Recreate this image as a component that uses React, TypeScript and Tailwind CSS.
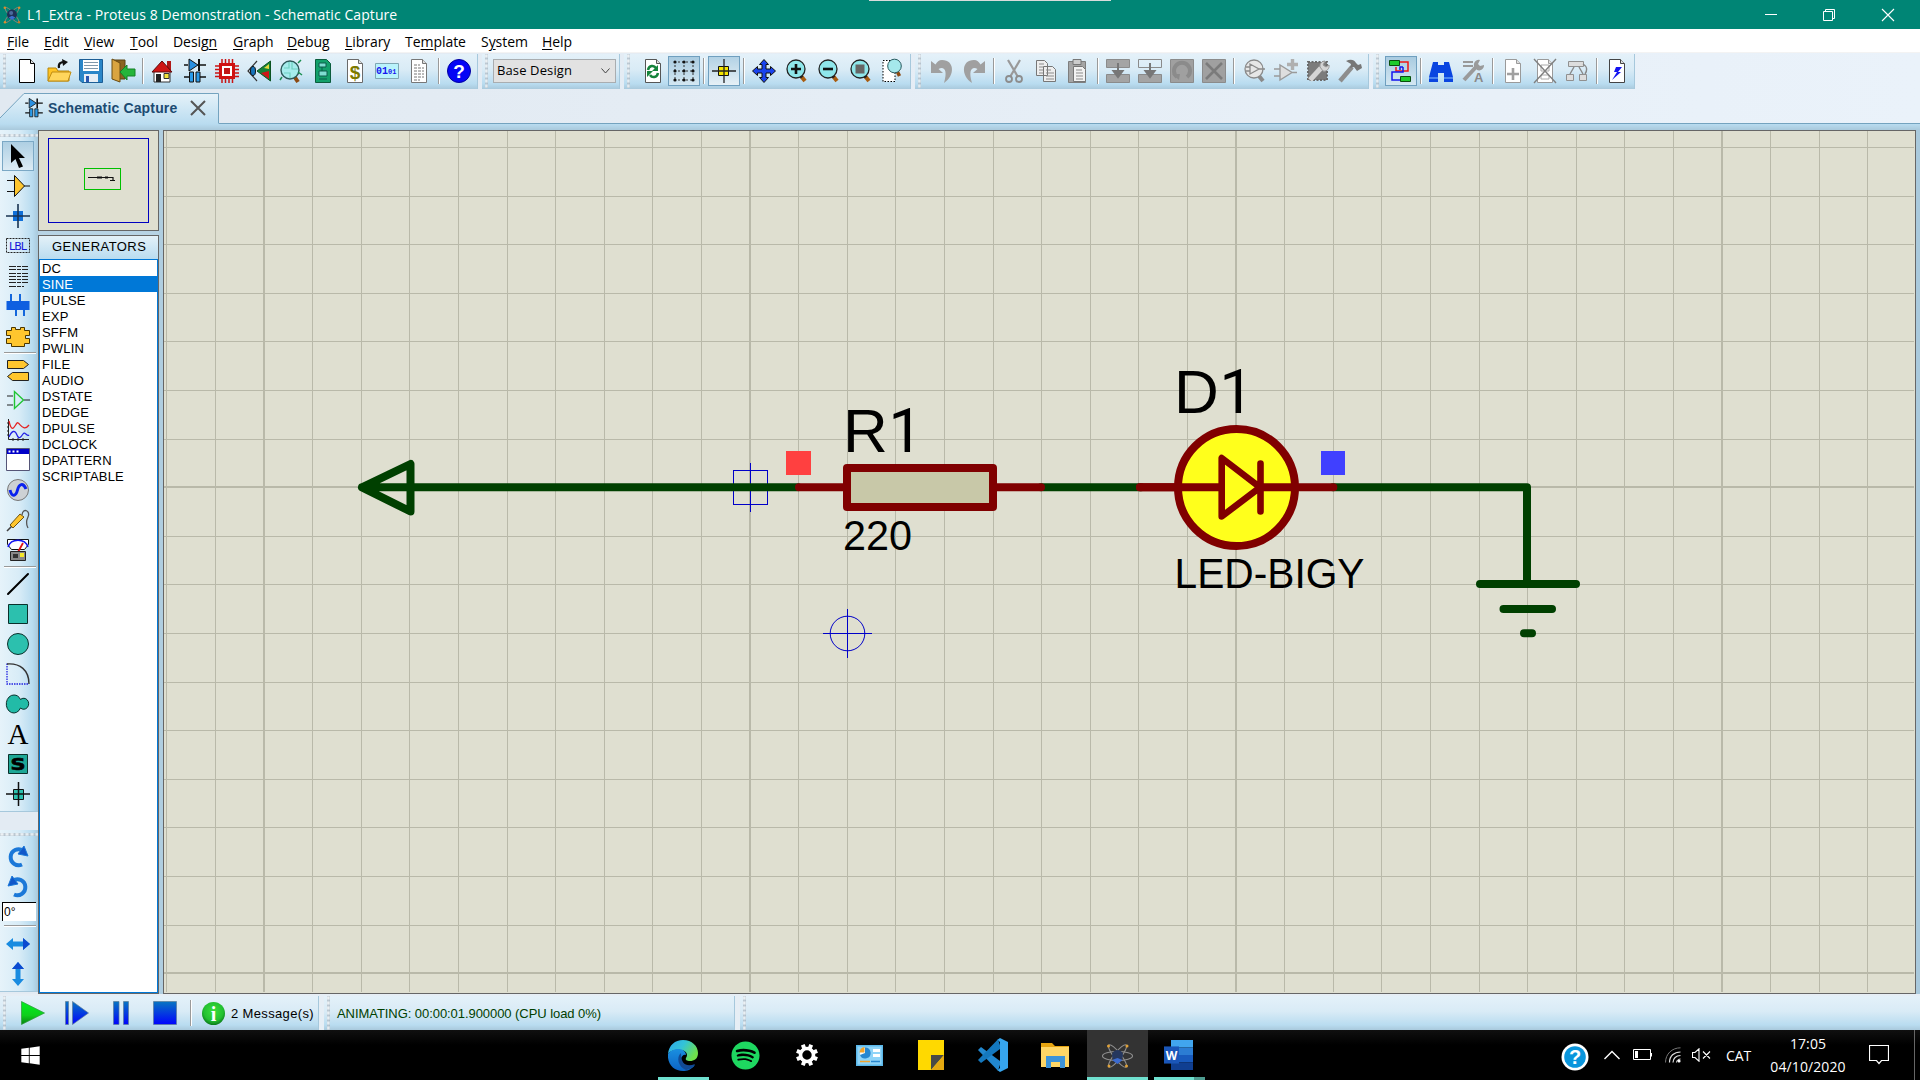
import React from "react";
import { FaSpotify, FaWindows } from "react-icons/fa";

type Kids = { children?: React.ReactNode };

const BAND =
  "bg-[linear-gradient(to_bottom,#e4f1f9_0%,#d9ebf6_45%,#b9dcf0_85%,#a9c9dc_100%)]";
const SIDE_BAND =
  "bg-[linear-gradient(to_right,#e6f3fa_0%,#d8ecf7_50%,#b9dcf0_85%,#a9c9dc_100%)]";

function Svg({ children, w = 24, h = 24 }: Kids & { w?: number; h?: number }) {
  return (
    <svg width={w} height={h} viewBox={`0 0 ${w} ${h}`} fill="none" className="block shrink-0 overflow-visible">
      {children}
    </svg>
  );
}

function Handle() {
  return (
    <div className="h-full w-[3px] shrink-0 bg-[radial-gradient(circle_at_40%_40%,#ffffff_0%,#a3b1bd_90%)] bg-[length:3px_5px] opacity-80" />
  );
}

function HandleH() {
  return (
    <div className="h-[3px] w-full shrink-0 bg-[radial-gradient(circle_at_40%_40%,#ffffff_0%,#a3b1bd_90%)] bg-[length:5px_3px] opacity-80" />
  );
}

function Sep() {
  return (
    <div className="flex h-full w-2 shrink-0 items-center justify-center">
      <div className="h-[26px] w-[2px] border-r border-white bg-[#9a9a9a]" />
    </div>
  );
}

function Tool({ children, active }: Kids & { active?: "dark" | "light" }) {
  const on =
    active === "dark"
      ? "border border-[#6f9fbf] bg-[linear-gradient(to_bottom,#a9cbe0,#d3e7f2)]"
      : active === "light"
      ? "border border-[#6f9fbf] bg-[linear-gradient(to_bottom,#b3d2e5,#e6f0f6)]"
      : "";
  return <div className={`flex h-[30px] w-8 shrink-0 items-center justify-center ${on}`}>{children}</div>;
}

function Band({ children, cls }: Kids & { cls: string }) {
  return (
    <div className={`flex h-[35px] shrink-0 items-center border-r border-[#a6c8dc] pb-px ${BAND} ${cls}`}>{children}</div>
  );
}

function Page({ children, c = "#000", x = 4 }: Kids & { c?: string; x?: number }) {
  return (
    <g>
      <path d={`M${x + 0.5} .5h11l4 4v19h-15z`} fill="#fff" stroke={c} />
      <path d={`M${x + 11.5} .5v4h4`} fill="#ddd" stroke={c} />
      {children}
    </g>
  );
}

function Lens({ fill = "#8fe6ea", c = "#222", handle = "#a85c10", children }: Kids & { fill?: string; c?: string; handle?: string }) {
  return (
    <g transform="translate(2 0)">
      <path d="M15 17l4 5" stroke={handle} strokeWidth="4" />
      <path d="M14 16l2 2.5" stroke={c} strokeWidth="3" />
      <circle cx="10" cy="10" r="9" fill={fill} stroke={c} strokeWidth="1.3" />
      {children}
    </g>
  );
}

function SchematicGlyph() {
  return (
    <Svg>
      <path d="M1 6h4M16 6h7M1 18h6M16 18h7" stroke="#111" strokeWidth="1.6" />
      <path d="M6 0v12l9-6z" fill="#2a8fe0" stroke="#111" />
      <path d="M16 0v12" stroke="#111" strokeWidth="2" />
      <path d="M6.5 13h4v10h-4zM13 13h4v10h-4z" fill="#2a9bea" stroke="#111" />
    </Svg>
  );
}

function ProteusLogo({ s = 22 }: { s?: number }) {
  return (
    <svg width={s} height={s} viewBox="0 0 24 24" fill="none" className="block shrink-0">
      <ellipse cx="12" cy="12" rx="12" ry="3" transform="rotate(48 12 12)" stroke="#8f857b" strokeWidth="1.1" />
      <ellipse cx="12" cy="12" rx="12" ry="3" transform="rotate(-48 12 12)" stroke="#8a8178" strokeWidth="1.1" />
      <circle cx="12" cy="11.500" r="6" fill="#1e3056" />
      <circle cx="11" cy="9.5" r="2.400" fill="#4b6a9e" />
      <path d="M8 15l4 3 4-3-4-2z" fill="#3b6fd0" />
      <circle cx="3.4" cy="3.2" r="1.5" fill="#d98e2b" />
      <circle cx="20.6" cy="3.2" r="1.5" fill="#d98e2b" />
      <circle cx="3.6" cy="20.6" r="1.5" fill="#d98e2b" />
      <circle cx="20.4" cy="20.6" r="1.5" fill="#c07c2b" />
    </svg>
  );
}

function TitleBar() {
  return (
    <div className="flex h-[29px] items-start bg-[#008575] text-white">
      <div className="flex h-full w-[869px] items-center pl-[2px]">
        <ProteusLogo s={20} />
        <span className="ml-[5px] font-['Open_Sans'] text-[14px] tracking-[0.08px] whitespace-nowrap">
          L1_Extra - Proteus 8 Demonstration - Schematic Capture
        </span>
      </div>
      <div className="h-px w-[242px] bg-[#d8dcdc]" />
      <div className="ml-auto flex h-full items-center pr-[2px]">
        <div className="flex w-[59px] justify-center"><Svg w={12} h={12}><path d="M0 5.5h12" stroke="#fff" /></Svg></div>
        <div className="flex w-[58px] justify-center">
          <Svg w={12} h={12}><path d="M.5 2.5h9v9h-9zM2.5 2V.5h9v9H10" stroke="#fff" /></Svg>
        </div>
        <div className="flex w-[60px] justify-center"><Svg w={12} h={12}><path d="M0 0l12 12M12 0L0 12" stroke="#fff" strokeWidth="1.1" /></Svg></div>
      </div>
    </div>
  );
}

const MENU: [string, string, string, string][] = [
  ["", "F", "ile", "w-[37px]"],
  ["", "E", "dit", "w-[40px]"],
  ["", "V", "iew", "w-[46px]"],
  ["", "T", "ool", "w-[43px]"],
  ["Desig", "n", "", "w-[60px]"],
  ["", "G", "raph", "w-[54px]"],
  ["", "D", "ebug", "w-[58px]"],
  ["", "L", "ibrary", "w-[60px]"],
  ["Te", "m", "plate", "w-[76px]"],
  ["S", "y", "stem", "w-[61px]"],
  ["", "H", "elp", "w-[40px]"],
];

function MenuBar() {
  return (
    <div className="flex h-[23px] items-center bg-white pt-px pl-[7px] font-['Open_Sans'] text-[14px] tracking-[-0.05px] text-black">
      {MENU.map(([a, u, b, w]) => (
        <div key={a + u + b} className={`shrink-0 whitespace-nowrap ${w}`}>
          {a}
          <span className="underline underline-offset-2">{u}</span>
          {b}
        </div>
      ))}
    </div>
  );
}

function Toolbars() {
  const G = "#8b8b8b";
  return (
    <div className="flex h-[37px] items-start gap-1 border-t border-[#f3f3f3] bg-[linear-gradient(to_right,#e1e9f1,#eaf2fa)] pt-px">
      <Band cls="w-[478px]">
        <div className="ml-[3px] h-full w-2"><Handle /></div>
        <Tool><Svg><Page /></Svg></Tool>
        <Tool>
          <Svg>
            <path d="M1 22V9h8l2 3h11v10z" fill="#ffc425" stroke="#b7860b" />
            <path d="M1 22l4-9h19l-3 9z" fill="#ffd65c" stroke="#c08c12" />
            <path d="M12 9c-1-5 2-6 6-6" stroke="#111" strokeWidth="2.2" />
            <path d="M15 0l6 3-5 4z" fill="#111" />
          </Svg>
        </Tool>
        <Tool>
          <Svg>
            <path d="M.5 .5h23v23H3l-2.500-2.500z" fill="#2a86c8" stroke="#1c5d95" />
            <path d="M4 1h16v11H4z" fill="#fff" />
            <path d="M5 3.500h14M5 6.500h14M5 9.500h14" stroke="#7f98ab" />
            <path d="M5 15h14v8H5z" fill="#e7eef5" />
            <path d="M7 17h3v6H7z" fill="#2a57b0" />
          </Svg>
        </Tool>
        <Tool>
          <Svg>
            <path d="M2 1h12v19H2z" fill="#8a6320" stroke="#5d4312" />
            <path d="M1 0l8 4v19l-8-3z" fill="#d9a440" stroke="#6b4c12" />
            <path d="M9 13l7-7v4h8v7h-8v4z" fill="#25b53a" stroke="#168026" />
          </Svg>
        </Tool>
        <Sep />
        <Tool>
          <Svg>
            <path d="M3 12h16v11H3z" fill="#fff" stroke="#333" />
            <path d="M16 2h4v10h-4z" fill="#b01818" />
            <path d="M1 13L11 2l10 11z" fill="#cf1515" stroke="#5d0a0a" />
            <path d="M5 15h5v8H5z" fill="#222" />
            <path d="M13 14.500h5v5h-5z" fill="#f2e33b" stroke="#333" />
          </Svg>
        </Tool>
        <Tool><SchematicGlyph /></Tool>
        <Tool>
          <Svg>
            <path d="M7 0v24M10.500 0v24M14 0v24M17.500 0v24M0 7h24M0 10.500h24M0 14h24M0 17.500h24" stroke="#c81414" strokeWidth="1.5" />
            <path d="M4 4h16v16H4z" fill="#cf1212" />
            <path d="M7 7h10v10H7z" fill="#fff" />
            <path d="M9 9h6v6H9z" fill="#c21616" />
          </Svg>
        </Tool>
        <Tool>
          <Svg>
            <path d="M10 2L1 12l9 10" stroke="#333" strokeWidth="1.2" />
            <ellipse cx="6" cy="12" rx="2.500" ry="4.500" fill="#1672b8" stroke="#111" />
            <path d="M23.500 2v20L10 12z" fill="#138236" stroke="#0c5321" />
            <path d="M22 12v8l-8-6z" fill="#cf1515" />
            <path d="M17 9l5-4v5z" fill="#e4d83c" />
          </Svg>
        </Tool>
        <Tool>
          <Svg>
            <path d="M15 17l4 6" stroke="#8c4a12" strokeWidth="4" />
            <circle cx="11" cy="11" r="9" fill="#a6ecec" stroke="#2d5959" strokeWidth="1.400" />
            <path d="M5 9h5V3M13 3v7h6M5 14h6v5" stroke="#6fd0c0" strokeWidth="1.200" />
            <path d="M19 4l3-3M3 18l-2 3M19 13l4 3" stroke="#1a8f50" strokeWidth="1.500" />
          </Svg>
        </Tool>
        <Tool>
          <Svg>
            <path d="M4.500 .5h11l4 4v19h-15z" fill="#12a06a" stroke="#0b5d3d" />
            <path d="M8 4h7v4H8zM8 12h8v5H8zM11 8v4M8 20h8" fill="#7eddd0" stroke="#0a5c4a" />
          </Svg>
        </Tool>
        <Tool>
          <Svg><Page c="#6a6a6a" /><text x="12" y="20" textAnchor="middle" fontFamily="Liberation Sans" fontWeight="700" fontSize="19" fill="#7d7a00">$</text></Svg>
        </Tool>
        <Tool>
          <Svg>
            <path d="M.5 4.500h23v15H.5z" fill="#b9f3fb" stroke="#7fa6b3" />
            <text x="1" y="15" fontFamily="Liberation Mono" fontWeight="700" fontSize="10" fill="#1717f0">01<tspan fontSize="7">01</tspan></text>
          </Svg>
        </Tool>
        <Tool>
          <Svg><Page c="#777"><path d="M7 6h6M7 9h10M7 12h10M7 15h10M7 18h10M7 21h6" stroke="#777" strokeDasharray="3 1" /></Page></Svg>
        </Tool>
        <Sep />
        <Tool>
          <Svg>
            <circle cx="12" cy="12" r="11.500" fill="#0505f5" stroke="#0000a0" />
            <text x="12" y="19" textAnchor="middle" fontFamily="Liberation Sans" fontWeight="700" fontSize="19" fill="#fff">?</text>
          </Svg>
        </Tool>
      </Band>

      <Band cls="w-[138px]">
        <div className="ml-[3px] h-full w-2"><Handle /></div>
        <div className="flex h-6 w-[123px] items-center justify-between border border-[#a9adb0] bg-[#e2e2e2] pr-[5px] pl-[3px] font-['Open_Sans'] text-[13px] tracking-[0.12px] text-black">
          Base Design
          <Svg w={9} h={6}><path d="M.5 .5l4 4.500 4-4.500" stroke="#444" /></Svg>
        </div>
      </Band>

      <Band cls="w-[287px]">
        <div className="ml-[3px] h-full w-[9px]"><Handle /></div>
        <Tool>
          <Svg><g transform="translate(1 0)"><Page c="#555"><path d="M7 11c1-5 6-5 8-2" stroke="#16843c" strokeWidth="2.500" /><path d="M17 6v6h-6zM6 12h6l-6 6z" fill="#16843c" /><path d="M17 14c-1 5-6 5-8 2" stroke="#16843c" strokeWidth="2.500" /></Page></g></Svg>
        </Tool>
        <Tool active="dark">
          <Svg>
            <path d="M2 3h20M2 12h20M2 21h20M3 2v20M12 2v20M21 2v20" stroke="#333" strokeDasharray="2 2" />
            {[3, 12, 21].map((y) => [3, 12, 21].map((x) => <circle key={`${x}-${y}`} cx={x} cy={y} r="1.600" fill="#111" />))}
          </Svg>
        </Tool>
        <Sep />
        <Tool active="light">
          <Svg>
            <path d="M6.500 7.500h10v9h-10z" fill="#f5e400" stroke="#111" />
            <path d="M0 12h24M12 0v24" stroke="#222" strokeWidth="1.300" />
          </Svg>
        </Tool>
        <Sep />
        <Tool>
          <Svg>
            <path d="M12 .5l4.500 5H14v4.500h4.500V7.500L23.500 12l-5 4.500V14H14v4.500h2.500l-4.500 5-4.500-5H10V14H5.500v2.500L.5 12l5-4.500V10H10V5.500H7.500z" fill="#1a43ee" stroke="#111" />
          </Svg>
        </Tool>
        <Tool><Svg><Lens><path d="M5 10h10M10 5v10" stroke="#111" strokeWidth="2.600" /></Lens></Svg></Tool>
        <Tool><Svg><Lens><path d="M5 10h10" stroke="#111" strokeWidth="2.600" /></Lens></Svg></Tool>
        <Tool><Svg><Lens><path d="M5.500 5.500h9v9h-9z" fill="#666" /></Lens></Svg></Tool>
        <Tool>
          <Svg>
            <g transform="translate(1.500 0)">
              <path d="M1.500 1.500h12v21h-12z" fill="#fff" stroke="#000" strokeDasharray="1.500 1.500" />
              <path d="M16 13l2 4" stroke="#8c4a12" strokeWidth="3.500" />
              <circle cx="13" cy="7" r="6.800" fill="#a5e8ec" stroke="#285a5e" />
            </g>
          </Svg>
        </Tool>
      </Band>

      <Band cls="w-[454px]">
        <div className="ml-[3px] h-full w-2"><Handle /></div>
        <Tool><Svg><path d="M1 2v12h12L8.500 10C14 7 18 11 14 24 25 17 25 1 12 1 9 1 7 3 5.500 5.500z" fill="#a0a0a0" /></Svg></Tool>
        <Tool><Svg><path d="M23 2v12H11l4.500-4C10 7 6 11 10 24-1 17-1 1 12 1c3 0 5 2 6.500 4.500z" fill="#a0a0a0" /></Svg></Tool>
        <Sep />
        <Tool>
          <Svg>
            <path d="M6 1l10 17M18 1L8 18" stroke="#999" strokeWidth="2.200" />
            <circle cx="7" cy="20" r="3" stroke="#8d8d8d" strokeWidth="1.800" /><circle cx="17" cy="20" r="3" stroke="#8d8d8d" strokeWidth="1.800" />
          </Svg>
        </Tool>
        <Tool>
          <Svg>
            <path d="M2.500 1.500h8l3 3v12h-11zM9.500 7.500h9l3 3v12h-12z" fill="#eee" stroke="#777" />
            <path d="M5 5h5M5 8h4M5 11h4M5 14h4M12 11h5M12 14h8M12 17h8M12 20h8" stroke={G} />
          </Svg>
        </Tool>
        <Tool>
          <Svg>
            <path d="M2.500 2.500h17v21h-17z" fill="#a5a5a5" stroke="#7e7e7e" />
            <path d="M7 .5h8v5H7z" fill="#ccc" stroke="#777" />
            <path d="M7.500 7.500h9l3 3v12h-12z" fill="#f2f2f2" stroke="#777" />
            <path d="M10 11h6M10 14h7M10 17h7M10 20h7" stroke={G} />
          </Svg>
        </Tool>
        <Sep />
        <Tool><Svg><path d="M.5 .5h23v8H.5zM.5 15.500h23v8H.5z" fill="#a4a4a4" stroke={G} /><path d="M12 4v12M7.500 12h9L12 18z" stroke="#777" strokeWidth="2" fill="#777" /></Svg></Tool>
        <Tool><Svg><path d="M.5 .5h23v8H.5z" stroke={G} /><path d="M.5 15.500h23v8H.5z" fill="#a4a4a4" stroke={G} /><path d="M12 4v12M7.500 12h9L12 18z" stroke="#777" strokeWidth="2" fill="#777" /></Svg></Tool>
        <Tool><Svg><path d="M.5 .5h23v23H.5z" fill="#a0a0a0" stroke={G} /><path d="M7 18a8 8 0 1 1 10 0" stroke={G} strokeWidth="4" /><path d="M2 15h8l-1 6z" fill={G} /></Svg></Tool>
        <Tool><Svg><path d="M.5 .5h23v23H.5z" fill="#a0a0a0" stroke={G} /><path d="M4 4l16 16M20 4L4 20" stroke="#7b7b7b" strokeWidth="2.600" /></Svg></Tool>
        <Sep />
        <Tool><Svg><Lens fill="#e6e6e6" c="#8a8a8a" handle="#8a8a8a"><path d="M6 5v10l9-5zM2 8h4M2 12h4M15 10h6" stroke="#8a8a8a" strokeWidth="1.300" /></Lens></Svg></Tool>
        <Tool>
          <Svg><path d="M6 6v15l12-7.500zM0 10h6M0 17h6M18 13.500h5" fill="#dedede" stroke="#9a9a9a" strokeWidth="1.400" /><path d="M18.500 0v11M13 5.500h11" stroke="#b0b0b0" strokeWidth="3.400" /></Svg>
        </Tool>
        <Tool>
          <Svg>
            <path d="M2 3h19v18H2z" fill="#7c7c7c" stroke="#6b6b6b" strokeWidth="2" strokeDasharray="2 1.500" />
            <path d="M4 21L15 9" stroke="#d5d5d5" strokeWidth="5" /><path d="M14 8a5 5 0 0 1 5-6l-2 4 3 2 3-2a5 5 0 0 1-6 6z" fill="#d5d5d5" stroke="#999" />
          </Svg>
        </Tool>
        <Tool><Svg><path d="M2 22L14 8" stroke="#8d8d8d" strokeWidth="4.500" /><path d="M8 2c4-2 8-2 10 2l2 2 3-1 1 4-5 3-3-4-4 1 1-4z" fill="#777" /></Svg></Tool>
      </Band>

      <Band cls="w-[262px]">
        <div className="ml-[3px] h-full w-[9px]"><Handle /></div>
        <Tool active="dark">
          <Svg>
            <path d="M10 3h9v9H7V8" stroke="#f01515" strokeWidth="1.500" />
            <path d="M14 8v5H3v8h9M14 8h-3v3" stroke="#1515f0" strokeWidth="1.500" />
            <path d="M.5 1.500h10v5H.5zM11.500 17.500h10v5h-10z" fill="#1fcb2b" stroke="#0a4d0d" />
          </Svg>
        </Tool>
        <Sep />
        <Tool><Svg><path d="M4 3h5v3h6V3h5l4 15v5h-9v-9H9v9H0v-5z" fill="#0a45e0" /><path d="M0 19h9M15 19h9" stroke="#8ec6ff" /></Svg></Tool>
        <Tool>
          <Svg><path d="M2 3h10M2 7h10" stroke="#999" strokeWidth="1.800" /><path d="M3 21L15 8" stroke="#9a9a9a" strokeWidth="4" /><path d="M13 7a5 5 0 0 1 6-6l-2 4 2 2 4-1a5 5 0 0 1-7 5z" fill="#9a9a9a" /><text x="13" y="23" fontFamily="Liberation Sans" fontWeight="700" fontSize="13" fill="#8a8a8a">A</text></Svg>
        </Tool>
        <Sep />
        <Tool><Svg><Page c="#9a9a9a"><path d="M12 9v12M6 15h12" stroke="#a0a0a0" strokeWidth="2.600" /></Page></Svg></Tool>
        <Tool><Svg><Page c="#9a9a9a"><path d="M8 6h8v6H8zM8 16h8v4H8z" stroke="#aaa" /></Page><path d="M1 0l22 24M23 0L1 24" stroke="#808080" strokeWidth="1.400" /></Svg></Tool>
        <Tool><Svg><path d="M3.500 2.500h15v5h-15zM1.500 15.500h7v6h-7zM14.500 15.500h7v6h-7z" fill="#ddd" stroke="#909090" /><path d="M9 8l-4 7M14 8l4 7M18 5c5 3 4 7 2 10" stroke="#888" strokeWidth="1.400" /></Svg></Tool>
        <Sep />
        <Tool><Svg><Page c="#444"><path d="M17 8h-6l-2 5h3l-5 8 9-8h-3z" fill="#1414f0" /></Page></Svg></Tool>
      </Band>
    </div>
  );
}

function TabRow() {
  return (
    <div className="h-[41px] bg-[linear-gradient(to_right,#e1e9f1,#eaf2fa)]">
      <div className="flex h-[35px] items-end border-b border-[#74a3bf]">
        <div className="relative h-[30px] w-[219px]">
          <svg width="220" height="31" viewBox="0 0 220 31" className="absolute inset-0">
            <defs>
              <linearGradient id="tab" x1="0" y1="0" x2="0" y2="1">
                <stop offset="0" stopColor="#e6f2f9" />
                <stop offset="1" stopColor="#b9dcf0" />
              </linearGradient>
            </defs>
            <path d="M0 31V25L24 .5H218.500V31z" fill="url(#tab)" />
            <path d="M0 25L24 .5H218.500V30" fill="none" stroke="#74a3bf" />
          </svg>
          <div className="relative flex h-full items-center pl-[22px]">
            <div className="mr-[2px] scale-[0.8]"><SchematicGlyph /></div>
            <span className="w-[143px] font-['Liberation_Sans'] text-[14px] font-bold tracking-[0.15px] whitespace-nowrap text-[#1c4a72]">Schematic Capture</span>
            <Svg w={14} h={14}><path d="M0 0l14 14M14 0L0 14" stroke="#555" strokeWidth="2" /></Svg>
          </div>
        </div>
      </div>
      <div className="h-[6px] bg-[linear-gradient(to_bottom,#b9dcf0,#a9c9dc)]" />
    </div>
  );
}

function SideTool({ children, active }: Kids & { active?: boolean }) {
  return (
    <div className={`ml-[2px] flex h-[30px] w-8 shrink-0 items-center justify-center ${active ? "border border-[#7ba8c5] bg-[linear-gradient(to_bottom,#aecfe3,#dcebf4)]" : ""}`}>
      {children}
    </div>
  );
}

function SideSep() {
  return <div className="my-px ml-1 h-[2px] w-8 shrink-0 border-b border-white bg-[#999]" />;
}

function Rotate({ flip }: { flip?: boolean }) {
  return (
    <Svg>
      <g transform={flip ? "translate(24 0) scale(-1 1)" : undefined}>
        <path d="M16 19.500a8 8 0 1 1 1-14" stroke="#1b78d8" strokeWidth="4" />
        <path d="M18 1l4 10-10-2z" fill="#1157c9" stroke="#1b78d8" />
      </g>
    </Svg>
  );
}

function LeftTools() {
  return (
    <div className="flex w-[38px] shrink-0 flex-col bg-[#e3ebf3]">
      <div className={`flex h-[682px] flex-col border-b border-[#a6c8dc] ${SIDE_BAND}`}>
        <div className="h-[11px] pt-[4px]"><HandleH /></div>
        <SideTool active>
          <Svg><path d="M5 0v19l4.500-4L13 24l4-1.500L13 14h6z" fill="#000" /></Svg>
        </SideTool>
        <SideTool><Svg><path d="M1 6.500h7M1 17.500h7M18 12h6" stroke="#111" strokeWidth="1.200" /><path d="M8.500 1.500v21l10-10.500z" fill="#ffc62e" stroke="#111" /></Svg></SideTool>
        <SideTool><Svg><path d="M7 7h10v10H7z" fill="#0f6fd8" /><path d="M0 12h24M12 0v24" stroke="#1a3350" strokeWidth="1.600" /></Svg></SideTool>
        <SideTool><Svg><path d="M.5 4.500h23v14H.5z" stroke="#222" strokeDasharray="2 1" /><text x="12" y="16" textAnchor="middle" fontFamily="DejaVu Sans" fontSize="11" textLength="18" fill="#1414d8">LBL</text></Svg></SideTool>
        <SideTool><Svg><path d="M3 2.500h19M3 5.500h19M3 9.500h19M3 12.500h19M3 15.500h19M3 18.500h19M3 22.500h15" stroke="#222" strokeDasharray="7 1 4 1" /></Svg></SideTool>
        <SideTool><Svg><path d="M5 0v8M14 0v8M10 15v7M18 15v7" stroke="#1467dc" strokeWidth="2" /><path d="M.5 7h23v9H.5z" fill="#0f5fe0" /></Svg></SideTool>
        <SideTool><Svg><path d="M5.500 3.500h4v2h5v-2h4v3h5v5h-4v3h4v5h-5v3h-13v-3h-5v-5h4v-3h-4v-5h5z" fill="#ffc62e" stroke="#4a3600" /></Svg></SideTool>
        <SideSep />
        <SideTool><Svg><path d="M1.500 2.500h16l5 4-5 4h-16zM22.500 14.500h-16l-5 4 5 4h16z" fill="#ffc62e" stroke="#222" /></Svg></SideTool>
        <SideTool><Svg><path d="M1 8h6M1 17h6M18 12h6" stroke="#222" /><path d="M8.500 3.500v17l9-8.500z" stroke="#1fc532" strokeWidth="1.400" /></Svg></SideTool>
        <SideTool><Svg><path d="M2.500 1v20.500H23M1 5h2M1 9h2M1 13h2M1 17h2M7 20v3M12 20v3M17 20v3" stroke="#222" /><path d="M3 3c3 14 6 4 8 2s6 10 12 2" stroke="#e52222" strokeWidth="1.300" /><path d="M3 19c3-7 6-7 8-2s4 2 6-1 4 3 6 1" stroke="#2222e5" strokeWidth="1.300" /></Svg></SideTool>
        <SideTool><Svg><path d="M.5 .5h23v22H.5z" fill="#fff" stroke="#557" /><path d="M1 1h22v5H1z" fill="#0000c8" /><path d="M2.500 3.500h10" stroke="#fff" strokeWidth="2" strokeDasharray="2 2" /></Svg></SideTool>
        <SideTool><Svg><circle cx="12" cy="12" r="10.500" fill="#cdd1d4" stroke="#777" /><path d="M4 12c2 8 6 6 7.500 0s5.500-8 8.500-1" stroke="#0a22ee" strokeWidth="3" /></Svg></SideTool>
        <SideTool><Svg><path d="M1 23l5-5" stroke="#444" strokeWidth="1.600" /><path d="M4 17l10-11 4 3L7 20z" fill="#ffc62e" stroke="#6d5210" /><path d="M16 7c1-8 9-4 6 2s-1 9 0 11" stroke="#555" strokeWidth="1.300" /></Svg></SideTool>
        <SideTool><Svg><path d="M1.500 1.500h21v5l-4 5h-13l-4-5z" fill="#fff" stroke="#111" /><path d="M2 9c3-9 17-9 20 0" stroke="#1414f0" strokeWidth="1.500" /><path d="M12 14l5-9" stroke="#e01414" strokeWidth="1.800" /><path d="M4.500 13.500h15v9h-15z" fill="#888" stroke="#222" /><path d="M7 16h5v4H7z" fill="#333" /><path d="M14 15h4v4h-4z" fill="#f4e82c" /></Svg></SideTool>
        <SideSep />
        <SideTool><Svg><path d="M2 22L22 2" stroke="#000" strokeWidth="2" strokeLinecap="round" /></Svg></SideTool>
        <SideTool><Svg><path d="M2.500 2.500h19v19h-19z" fill="#2cc0ae" stroke="#0a302b" /></Svg></SideTool>
        <SideTool><Svg><circle cx="12" cy="12" r="10.500" fill="#2cc0ae" stroke="#0a302b" /></Svg></SideTool>
        <SideTool><Svg><path d="M1 1.500v20.500h22" stroke="#2222e0" strokeWidth="1.300" strokeDasharray="1.500 1" /><path d="M1 2c13-1 22 6 22 20" stroke="#333" strokeWidth="1.400" /></Svg></SideTool>
        <SideTool><Svg><path d="M8 3a7.500 9 0 1 0 6.500 13 5 5.500 0 1 0 0-8.500A7.500 9 0 0 0 8 3z" fill="#22bba7" stroke="#0a302b" /></Svg></SideTool>
        <SideTool><Svg><text x="12" y="22" textAnchor="middle" fontFamily="Liberation Serif" fontSize="29" fill="#000">A</text></Svg></SideTool>
        <SideTool><Svg><path d="M2.500 2.500h19v19h-19z" fill="#1da796" stroke="#0a302b" /><text x="12" y="17.500" textAnchor="middle" fontFamily="DejaVu Sans" fontWeight="700" fontSize="15" textLength="15" lengthAdjust="spacingAndGlyphs" fill="#000" stroke="#000" strokeWidth=".6">S</text></Svg></SideTool>
        <SideTool><Svg><path d="M7.500 7.500h10v10h-10z" fill="#2cc0ae" stroke="#111" /><path d="M0 12h24M12.500 0v24" stroke="#111" strokeWidth="1.500" /></Svg></SideTool>
      </div>
      <div className={`mt-[18px] flex h-[162px] flex-col border-b border-[#a6c8dc] ${SIDE_BAND}`}>
        <div className="h-[12px] pt-[3px]"><HandleH /></div>
        <SideTool><Rotate /></SideTool>
        <SideTool><Rotate flip /></SideTool>
        <div className="ml-[2px] h-[19px] w-[34px] border-t border-l border-black bg-white pl-px font-['Liberation_Sans'] text-[12px] leading-[18px]">0°</div>
        <div className="mt-[3px] mb-px"><SideSep /></div>
        <SideTool><Svg><path d="M0 12l7-6v3.500h10V6l7 6-7 6v-3.500H7V18z" fill="#198be0" /><path d="M17 6l7 6-7 6z" fill="#0c4ad0" /></Svg></SideTool>
        <SideTool><Svg><path d="M12 0l6 7h-3.500v10H18l-6 7-6-7h3.500V7H6z" fill="#198be0" /><path d="M12 0l6 7H6z" fill="#0c4ad0" /></Svg></SideTool>
      </div>
    </div>
  );
}

const GENERATORS = [
  "DC", "SINE", "PULSE", "EXP", "SFFM", "PWLIN", "FILE", "AUDIO", "DSTATE", "DEDGE", "DPULSE", "DCLOCK", "DPATTERN", "SCRIPTABLE",
];

function SidePanel() {
  return (
    <div className="flex w-[121px] shrink-0 flex-col gap-1 bg-[#b7d3e4]">
      <div className="flex h-[101px] items-center justify-center border border-[#666] bg-[#dfdfd0]">
        <div className="flex h-[85px] w-[101px] items-center justify-center border border-[#0000c0]">
          <div className="mb-[3px] ml-[7px] h-[22px] w-[37px] border border-[#00c000]">
            <svg width="35" height="20" viewBox="0 0 35 20" fill="none">
              <path d="M3 8.500h11M17 8.500h11v3M25 11.500h5" stroke="#111" strokeWidth="1.200" />
              <path d="M12 8.500h5M20 8.500h3" stroke="#111" strokeWidth="2" />
            </svg>
          </div>
        </div>
      </div>
      <div className="flex flex-1 flex-col border border-[#666] bg-white font-['Liberation_Sans'] text-[13px] text-black">
        <div className="h-[23px] bg-[linear-gradient(to_bottom,#e4f1f8,#b9dcf0)] pl-[13px] leading-[22px] tracking-[0.45px]">GENERATORS</div>
        <div className="flex-1 border border-[#0078d7]">
          {GENERATORS.map((g) => (
            <div key={g} className={`h-4 pl-[2px] leading-[17px] tracking-[0.2px] ${g === "SINE" ? "bg-[#0078d7] text-white" : ""}`}>{g}</div>
          ))}
        </div>
      </div>
    </div>
  );
}

const PITCH = 48.6;

function Schematic() {
  const cols = Array.from({ length: 36 }, (_, i) => i - 2);
  const rows = Array.from({ length: 18 }, (_, i) => i);
  return (
    <svg width="1751" height="862" viewBox="164 131 1751 862" fill="none" className="block">
      <g fill="#b9b9a9" shapeRendering="crispEdges">
        {cols.map((i) => {
          const x = Math.floor(264 + i * PITCH + 0.001);
          const major = i % 10 === 0;
          return x < 1914 ? <rect key={i} x={major ? x - 1 : x} y="131" width={major ? 2 : 1} height="861" /> : null;
        })}
        {rows.map((i) => {
          const y = Math.round(147 + i * PITCH);
          const major = i === 7 || i === 17;
          return <rect key={i} x="164" y={major ? y - 1 : y} width="1750" height={major ? 2 : 1} />;
        })}
      </g>
      <g stroke="#0000c8" shapeRendering="crispEdges">
        <path d="M733.500 470.500h34v34h-34zM750.500 463v49M847.500 609v49M823 633.500h49" />
      </g>
      <circle cx="847.500" cy="633.500" r="17.300" stroke="#0000c8" />
      <g stroke="#004000" strokeWidth="8" strokeLinecap="round" strokeLinejoin="round">
        <path d="M362 487.300L410.500 464v47.500zM362 487.300H798M1041 487.300h100M1333 487.300h194V584M1480 584h96M1503.500 609h48.500M1524 633.300h8" />
      </g>
      <g stroke="#800000" strokeWidth="8" strokeLinecap="round" strokeLinejoin="round">
        <path d="M799 487.300h48M993 487.300h48M1140 487.300h37" />
        <rect x="847" y="468" width="146" height="39" fill="#c8c8a8" />
        <circle cx="1236.500" cy="487.500" r="58.500" fill="#ffff1c" />
        <path d="M1140 487.300h82M1260.500 487.300h72.800" />
        <path d="M1221.700 458v58.500L1260 487.300zM1260.500 463.500v48" strokeWidth="6.600" fill="#ffff1c" />
      </g>
      <path d="M786 451h25v24h-25z" fill="#ff4040" />
      <path d="M1321 451h24v24h-24z" fill="#4040ff" />
      <g fill="#000" fontFamily="Liberation Sans, Arial, sans-serif">
        <text x="843" y="452" fontSize="62">R<tspan fontFamily="Roboto" fontSize="60.500" x="888.500">1</tspan></text>
        <text x="1174" y="413" fontSize="62">D<tspan fontFamily="Roboto" fontSize="60.500" x="1219.500">1</tspan></text>
        <text x="843" y="550" fontSize="43" textLength="69" lengthAdjust="spacingAndGlyphs">220</text>
        <text x="1174.500" y="587.500" fontSize="43" textLength="190" lengthAdjust="spacingAndGlyphs">LED-BIGY</text>
      </g>
    </svg>
  );
}

function StatusBar() {
  return (
    <div className="flex h-[36px] shrink-0 gap-[5px] bg-[#e6eef5] pt-[2px] font-['Liberation_Sans'] text-[13px]">
      <div className={`flex h-[34px] w-[319px] items-center border-r border-[#a6c8dc] ${BAND}`}>
        <div className="ml-[3px] h-full w-[18px]"><Handle /></div>
        <svg width="160" height="24" viewBox="21 0 160 24" className="shrink-0">
          <defs>
            <linearGradient id="go" x1="0" y1="0" x2="0" y2="1"><stop offset="0" stopColor="#00f020" /><stop offset=".6" stopColor="#0ecf1c" /><stop offset="1" stopColor="#078010" /></linearGradient>
            <linearGradient id="bl" x1="0" y1="0" x2="0" y2="24" gradientUnits="userSpaceOnUse"><stop offset="0" stopColor="#0878c0" /><stop offset="1" stopColor="#0000ff" /></linearGradient>
          </defs>
          <path d="M21.500 .5v23L44.500 12z" fill="url(#go)" stroke="#2c9a3a" strokeWidth=".7" />
          <g fill="url(#bl)" stroke="#5d7d98" strokeWidth=".7">
            <path d="M65.500 .5h3v23h-3zM72.500 .5v23L88.500 12zM113.500 .5h5.500v23h-5.500zM123.500 .5h5v23h-5zM153.500 .5h23v23h-23z" />
          </g>
        </svg>
        <div className="ml-[9px] h-[26px] w-[2px] shrink-0 border-r border-white bg-[#9a9a9a]" />
        <svg width="23" height="23" viewBox="0 0 23 23" className="ml-[10px] shrink-0">
          <defs><radialGradient id="inf" cx=".5" cy=".4" r=".6"><stop offset="0" stopColor="#3be03b" /><stop offset=".7" stopColor="#22c030" /><stop offset="1" stopColor="#0a7a1a" /></radialGradient></defs>
          <circle cx="11.500" cy="11.500" r="11.500" fill="url(#inf)" />
          <text x="11.500" y="18.500" textAnchor="middle" fontFamily="Liberation Serif" fontWeight="700" fontSize="20" fill="#fff">i</text>
        </svg>
        <span className="mt-px ml-[6px] tracking-[0.35px] whitespace-nowrap text-black">2 Message(s)</span>
      </div>
      <div className={`flex h-[34px] w-[411px] items-center border-r border-[#a6c8dc] ${BAND}`}>
        <div className="ml-[3px] h-full w-[10px]"><Handle /></div>
        <span className="mt-px tracking-[-0.06px] whitespace-nowrap text-[#004000]">ANIMATING: 00:00:01.900000 (CPU load 0%)</span>
      </div>
      <div className={`h-[34px] flex-1 pl-[3px] ${BAND}`}><Handle /></div>
    </div>
  );
}

function Task({ children, bar, cls = "w-[62px]" }: Kids & { bar?: boolean; cls?: string }) {
  return (
    <div className={`flex h-full shrink-0 flex-col items-center ${cls}`}>
      <div className="flex h-[47px] items-center pt-[3px]">{children}</div>
      <div className={`h-[3px] w-[51px] ${bar ? "bg-[#6fe0cf]" : ""}`} />
    </div>
  );
}

function Taskbar() {
  return (
    <div className="flex h-[50px] shrink-0 items-center bg-[linear-gradient(to_bottom,#101010,#000_30%)] text-white">
      <div className="flex w-[652px] items-center pl-5"><FaWindows size={21} /></div>
      <Task bar>
        <svg width="30" height="31" viewBox="0 0 30 31">
          <defs>
            <linearGradient id="e1" x1="0" y1="0" x2="1" y2=".5"><stop offset="0" stopColor="#2da8ee" /><stop offset=".5" stopColor="#33c3d8" /><stop offset="1" stopColor="#6fe04a" /></linearGradient>
            <linearGradient id="e2" x1="0" y1="0" x2="0" y2="1"><stop offset="0" stopColor="#1a8fe0" /><stop offset="1" stopColor="#0c63c4" /></linearGradient>
          </defs>
          <path d="M0 14C1 5 7 0 15 0c9 0 15 6 15 13 0 6-4 8-8 8-3 0-5-1-4-3 3-4-1-8-5-8C7 9 2 11 0 14z" fill="url(#e1)" />
          <path d="M0 14c2-3 6-5 11-5 4 0 7 3 7 6-2-1-5 1-5 5 0 5 5 9 14 5-4 5-8 6-12 6C6 31-1 24 0 14z" fill="url(#e2)" />
          <path d="M13 13c-5 4-3 14 5 17 5-1 8-4 9-6-8 3-14 1-14-11z" fill="#124a94" />
        </svg>
      </Task>
      <Task><FaSpotify size={29} color="#1ed760" /></Task>
      <Task>
        <svg width="24" height="24" viewBox="0 0 24 24" fill="none">
          {[22.5, 67.5, 112.5, 157.5].map((a) => <path key={a} d="M12 1v22" transform={`rotate(${a} 12 12)`} stroke="#fff" strokeWidth="4" />)}
          <circle cx="12" cy="12" r="6.500" fill="#000" stroke="#fff" strokeWidth="3.600" />
        </svg>
      </Task>
      <Task>
        <svg width="27" height="21" viewBox="0 0 27 21">
          <rect width="27" height="21" fill="#5bb8ea" /><rect x="1.500" y="1.500" width="24" height="18" fill="#8fd4f8" />
          <circle cx="9" cy="8" r="5" fill="#fff" /><path d="M9 8V2.500A5.500 5.500 0 1 1 4 10z" fill="#2787d0" /><path d="M8.500 7.500V2a5.500 5.500 0 0 0-5 5.500z" fill="#f2a42b" />
          <path d="M17 4h7v3h-7zM17 9h7v3h-7z" fill="#fff" /><path d="M4 16.500h10" stroke="#f2a42b" strokeWidth="1.500" /><path d="M15 16.500h9" stroke="#2787d0" strokeWidth="1.500" />
        </svg>
      </Task>
      <Task>
        <svg width="26" height="30" viewBox="0 0 26 30"><path d="M0 0h26v30H0z" fill="#ffd900" /><path d="M13 15h13L13 30z" fill="#4a4a46" /><path d="M26 15L13 30h13z" fill="#e5a911" /></svg>
      </Task>
      <Task>
        <svg width="30" height="34" viewBox="0 0 30 30" preserveAspectRatio="none">
          <path d="M3 8L0 10.500 20 29l3-8z" fill="#2288cf" /><path d="M3 22l-3-2.500L20 1l3 8z" fill="#1478be" />
          <path d="M22 0l8 3.500v23L22 30l-2.500-1.500 2.500-2V3.500l-2.500-2z" fill="#36a5ee" />
        </svg>
      </Task>
      <Task>
        <svg width="28" height="27" viewBox="0 0 28 27"><path d="M0 1h11l3 3h14v21H0z" fill="#e6a410" /><path d="M0 5h28v20H0z" fill="#ffd666" /><path d="M5 14h19v12h-5v-6h-9v6H5z" fill="#3d93d8" /></svg>
      </Task>
      <div className="ml-[1px] flex h-full w-[61px] shrink-0 flex-col items-center bg-[#333]">
        <div className="flex h-[47px] items-center pt-1">
          <svg width="31" height="26" viewBox="0 0 31 26" fill="none">
            <g stroke="#8f8f8f" strokeWidth="1.100"><ellipse cx="15.500" cy="13" rx="15" ry="4.500" /><ellipse cx="15.500" cy="13" rx="14" ry="3.500" transform="rotate(52 15.500 13)" /><ellipse cx="15.500" cy="13" rx="14" ry="3.500" transform="rotate(-52 15.500 13)" /></g>
            <circle cx="15.500" cy="12.500" r="5.500" fill="#25375e" /><path d="M10 17l5.500 4 5-4-5-2z" fill="#3c6bd0" />
            <g fill="#e0a238"><circle cx="6.500" cy="3" r="1.500" /><circle cx="25" cy="3" r="1.500" /><circle cx="7" cy="23" r="1.500" /><circle cx="24.500" cy="23" r="1.500" /></g>
          </svg>
        </div>
        <div className="h-[3px] w-full bg-[#6fe0cf]" />
      </div>
      <div className="ml-[6px] flex h-full w-[51px] shrink-0 flex-col">
        <div className="flex h-[47px] items-center pt-0.5 pl-[10px]">
          <svg width="29" height="30" viewBox="0 0 29 28" preserveAspectRatio="none">
            <path d="M7 0h22v7H7z" fill="#41a5ee" /><path d="M7 7h22v7H7z" fill="#2b7cd3" /><path d="M7 14h22v7H7z" fill="#185abd" /><path d="M7 21h22v7H7z" fill="#103f91" />
            <path d="M0 6h15v16H0z" fill="#1a56b8" /><text x="7.500" y="18.500" textAnchor="middle" fontFamily="Open Sans" fontWeight="700" fontSize="12" fill="#fff">W</text>
          </svg>
        </div>
        <div className="flex h-[3px]"><div className="w-10 bg-[#6fe0cf]" /><div className="w-[11px] bg-[#4d9c90]" /></div>
      </div>
      <div className="ml-auto flex items-center font-['Open_Sans']">
        <svg width="28" height="28" viewBox="0 0 28 28" className="mt-[3px] mr-[15px]">
          <circle cx="14" cy="14" r="13.500" fill="#fff" /><circle cx="14" cy="14" r="10.800" fill="#0a95dc" />
          <text x="14" y="21" textAnchor="middle" fontFamily="Liberation Sans" fontWeight="700" fontSize="20" fill="#fff">?</text>
        </svg>
        <svg width="16" height="10" viewBox="0 0 16 10" fill="none" className="mr-[13px]"><path d="M.5 9L8 1.500 15.500 9" stroke="#fff" strokeWidth="1.400" /></svg>
        <svg width="19" height="12" viewBox="0 0 19 12" fill="none" className="mr-[13px]"><path d="M.5 .5h17v10H.5zM18.500 4v3.500" stroke="#fff" /><path d="M2 2h3v7H2z" fill="#fff" /></svg>
        <svg width="16" height="16" viewBox="0 0 16 16" fill="none" className="mr-[11px]">
          <path d="M.5 15.500C.5 7 7 .8 15.500 .8" stroke="#777" /><path d="M4.500 15.500C4.500 9 9 5 15.500 5M8 15.500c0-4 3-7 7.500-7" stroke="#ddd" strokeWidth="1.200" /><path d="M11.500 15.500c0-2 1.500-3.500 4-3.500" stroke="#ddd" /><circle cx="14" cy="14" r="1.600" fill="#fff" />
        </svg>
        <svg width="19" height="14" viewBox="0 0 19 14" fill="none" className="mr-[15px]"><path d="M.5 4.500h2.500L7 .8v12.400L3 9.500H.5zM11 3.500l7 7M18 3.500l-7 7" stroke="#fff" strokeWidth="1.100" /></svg>
        <span className="w-[44px] text-[14px] tracking-[-0.1px]">CAT</span>
        <div className="flex w-[76px] flex-col items-center text-[14px] leading-[23px] tracking-[0.1px] whitespace-nowrap"><span>17:05</span><span>04/10/2020</span></div>
        <svg width="20" height="20" viewBox="0 0 20 20" fill="none" className="mr-[25px] ml-[23px]"><path d="M.5 .5h19v15h-7L10 18.500 7.500 15.500h-7z" stroke="#fff" strokeWidth="1.200" /></svg>
        <div className="mr-[5px] h-[50px] w-px bg-[#666]" />
      </div>
    </div>
  );
}

export default function App() {
  return (
    <div className="flex h-[1080px] w-[1920px] flex-col overflow-hidden bg-[#b0cee0]">
      <TitleBar />
      <MenuBar />
      <Toolbars />
      <TabRow />
      <div className="flex h-[864px] shrink-0">
        <LeftTools />
        <SidePanel />
        <div className="ml-[4px] h-[864px] w-[1753px] border border-[#666] bg-[#dfdfd0]">
          <Schematic />
        </div>
        <div className="flex-1 bg-[#a9c9dc]" />
      </div>
      <StatusBar />
      <Taskbar />
    </div>
  );
}
